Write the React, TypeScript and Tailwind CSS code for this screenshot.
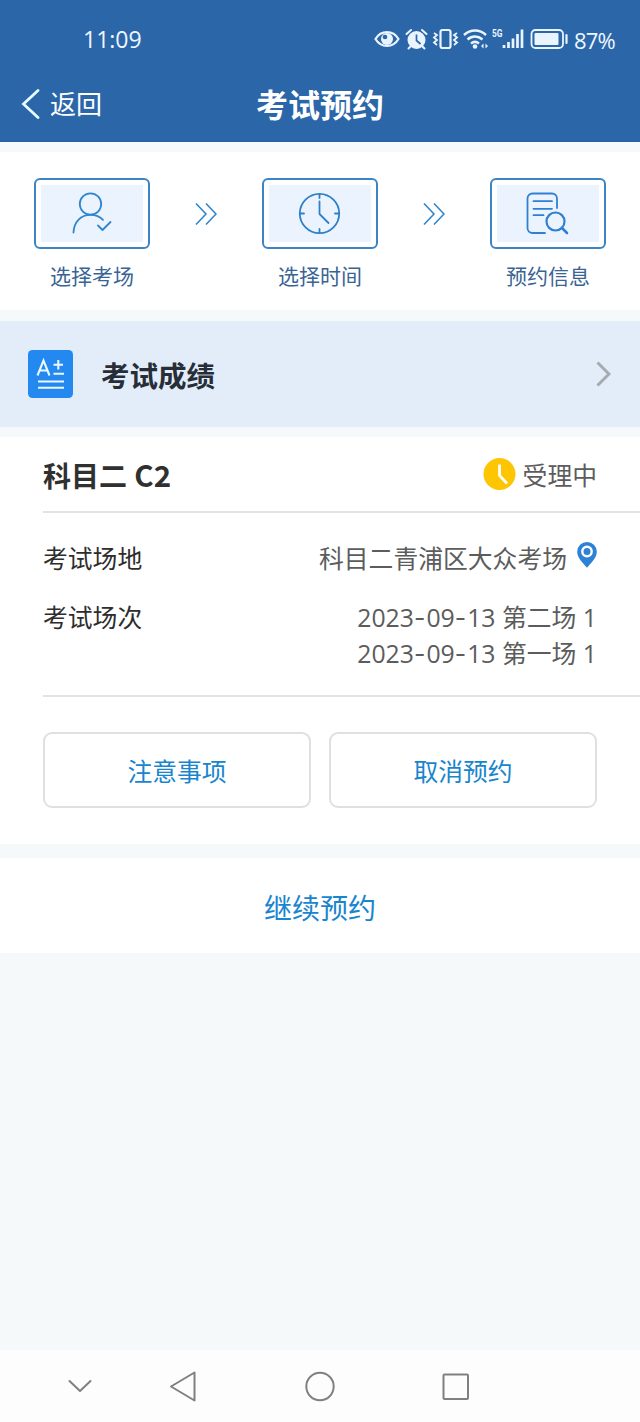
import type { ReactNode } from "react";

interface Step {
  label: string;
  icon: ReactNode;
}

const sessions = [
  { date: "2023-09-13", name: "第二场", count: 1 },
  { date: "2023-09-13", name: "第一场", count: 1 },
];

function UserCheckIcon() {
  return (
    <svg width="44" height="44" viewBox="0 0 44 44" fill="none" stroke="#2f86cc" strokeWidth="1.8" strokeLinecap="round">
      <circle cx="20.5" cy="12" r="10.7" />
      <path d="M3.5 40.500C4 29.500 11 22.800 20.5 22.800c5 0 9.500 1.700 12.500 5" />
      <path d="M28 33.500l4.500 4.500 8-8" strokeLinejoin="round" />
    </svg>
  );
}

function ClockIcon() {
  return (
    <svg width="44" height="44" viewBox="0 0 44 44" fill="none" stroke="#2f80c6" strokeWidth="1.8" strokeLinecap="round">
      <circle cx="21.500" cy="21.500" r="19.7" />
      <path d="M21.500 9.500v12.500l9 9" strokeLinejoin="round" />
      <path d="M21.500 2.500v3.500M21.500 37v3.500M2.500 21.500h3.500M37 21.500h3.500" />
    </svg>
  );
}

function DocSearchIcon() {
  return (
    <svg width="44" height="44" viewBox="0 0 44 44" fill="none" stroke="#2f80d0" strokeWidth="1.8" strokeLinecap="round">
      <path d="M31 16V6.500a5 5 0 0 0-5-5H6.500a5 5 0 0 0-5 5v29.500a5 5 0 0 0 5 5h12.500" />
      <path d="M7.500 9.200h18.500M7.500 16.800h18.500M7.500 23.200h10" />
      <circle cx="29.500" cy="29.500" r="9" strokeWidth="2.200" />
      <path d="M36 36l5 5" strokeWidth="2.600" />
    </svg>
  );
}

const steps: Step[] = [
  { label: "选择考场", icon: <UserCheckIcon /> },
  { label: "选择时间", icon: <ClockIcon /> },
  { label: "预约信息", icon: <DocSearchIcon /> },
];

function DoubleArrow() {
  return (
    <svg width="22" height="24" viewBox="0 0 22 24" fill="none" stroke="#2f86cc" strokeWidth="1.6" className="mt-6">
      <path d="M1 1.500l10 10.500-10 10.500M11 1.500l10 10.500-10 10.500" />
    </svg>
  );
}

function StatusIcons() {
  return (
    <svg width="196" height="24" viewBox="0 0 196 24" fill="none" stroke="#e9f4ff">
      {/* Eye */}
      <path d="M1.500 12C7 2.800 19 2.800 24.500 12 19 21.200 7 21.200 1.500 12z" strokeWidth="2.200" />
      <circle cx="13" cy="12" r="6" fill="#e9f4ff" stroke="none" />
      <circle cx="11" cy="10" r="2.300" fill="#2b66a8" stroke="none" />
      {/* Alarm */}
      <circle cx="42.500" cy="13" r="9" fill="#e9f4ff" stroke="none" />
      <path d="M32.500 7l4.500-4M48 3l4.500 4M37 19l-2.500 2.500M48 19l2.500 2.500" strokeWidth="2" strokeLinecap="round" />
      <path d="M42.500 7.500v6l4 3.500" stroke="#2b66a8" strokeWidth="1.700" />
      {/* Vibrate */}
      <rect x="66.500" y="3" width="10" height="18" rx="2" strokeWidth="2.200" />
      <path d="M60 6l3 2-3 2.500 3 2.500-3 2.500 3 2.500M83 6l-3 2 3 2.500-3 2.500 3 2.500-3 2.500" strokeWidth="1.800" />
      {/* Wifi */}
      <path d="M90 8c6.500-6 15.500-6 22 0M93.500 12.500c4.500-4 10.500-4 15 0M97 16.500c2.500-2 5.500-2 8 0" strokeWidth="2.500" />
      <circle cx="101" cy="19.500" r="2.300" fill="#e9f4ff" stroke="none" />
      <path d="M109.500 16.500v5l-2.500-2.500zM111.500 16.500v5l2.500-2.500z" fill="#e9f4ff" stroke="none" />
      {/* Signal */}
      <text x="118" y="9.500" fill="#e9f4ff" stroke="none" fontFamily="Roboto" fontWeight="700" fontSize="11.500" textLength="10.500" lengthAdjust="spacingAndGlyphs">
        5G
      </text>
      <path d="M130 21v-3M134.500 21v-6M139 21V11.500M143.500 21V7M148 21V2.500" strokeWidth="2.700" />
      {/* Battery */}
      <rect x="157.500" y="3" width="31.500" height="18" rx="4" strokeWidth="1.800" />
      <rect x="160.500" y="6" width="24" height="12" rx="1" fill="#e9f4ff" stroke="none" />
      <path d="M192.500 8v8" strokeWidth="2.200" strokeLinecap="round" />
    </svg>
  );
}

function DateText({ value }: { value: string }) {
  const parts = value.split("-");
  return (
    <>
      {parts.map((part, index) => (
        <span key={index}>
          {index > 0 && <span className="font-['Inter'] tracking-[1px]">-</span>}
          {part}
        </span>
      ))}
    </>
  );
}

export default function App() {
  return (
    <div className="flex h-[1422px] w-[640px] flex-col overflow-hidden bg-[#f5f9fa] font-['Open_Sans','Noto_Sans_CJK_SC',sans-serif] leading-none">
      {/* Header */}
      <header className="h-[142px] border-b-2 border-[#2d5eaa] bg-[#2b66a8] text-white">
        <div className="flex h-[66px] items-center justify-between pt-3 pr-[26px] pl-[83px] text-[#eef6ff]">
          <span className="pt-px text-[23px]">11:09</span>
          <div className="flex items-center gap-1">
            <StatusIcons />
            <span className="w-10 pt-0.5 text-[22px] tracking-[-0.8px]">87%</span>
          </div>
        </div>
        <div className="grid h-[76px] grid-cols-3 items-center">
          <button className="flex items-center gap-2.5 pl-[21px] text-[26px]">
            <svg width="19" height="30" viewBox="0 0 19 30" fill="none" stroke="#e6fbff" strokeWidth="2.800">
              <path d="M17 1.500L2.500 15 17 28.500" strokeLinecap="round" />
            </svg>
            返回
          </button>
          <h1 className="pt-px text-center text-[32px] font-bold">考试预约</h1>
        </div>
      </header>

      {/* Steps */}
      <section className="mt-2.5 flex h-[158px] items-start justify-between bg-white px-[34px] pt-[26px]">
        {steps.map((step, index) => (
          <div key={step.label} className="contents">
            {index > 0 && <DoubleArrow />}
            <div className="flex w-[116px] flex-col items-center">
              <div className="h-[71px] w-full rounded-md border-2 border-[#3b85c4] p-[5px]">
                <div className="flex h-full items-center justify-center bg-[#ebf3ff]">{step.icon}</div>
              </div>
              <p className="mt-[15px] text-[21px] leading-6 text-[#3a6494]">{step.label}</p>
            </div>
          </div>
        ))}
      </section>

      {/* Score entry */}
      <section className="mt-[11px] flex h-[106px] items-center bg-[#e2edf9] pr-[29px] pl-7">
        <svg width="45" height="48" viewBox="0 0 45 48">
          <rect width="45" height="48" rx="4.500" fill="#2488f1" />
          <path
            d="M9.500 25.500L15.500 10.500l6 15M11.800 20.500h7.600M25.500 14.700h9.500M30.300 10v9.500M25.500 23.800h10.500M10 31.500h26M10 37.800h26"
            fill="none"
            stroke="#eaf8ff"
            strokeWidth="2.100"
          />
        </svg>
        <h2 className="ml-7 flex-1 pt-1 text-[28.500px] font-bold text-[#272e38]">考试成绩</h2>
        <svg width="15" height="26" viewBox="0 0 15 26" fill="none" stroke="#a7abb0" strokeWidth="3">
          <path d="M1.500 1.500L13 13 1.500 24.500" />
        </svg>
      </section>

      {/* Appointment */}
      <section className="mt-2.5 h-[407px] bg-white pl-[43px] text-[24.800px] text-[#5c5c5c]">
        <div className="flex h-[76px] items-center justify-between border-b-2 border-[#e3e3e3] pr-[43px]">
          <h2 className="pt-0.5 font-['Noto_Sans_CJK_SC',sans-serif] text-[28px] font-bold text-[#303030]">
            科目二 <span className="ml-px text-[29.500px]">C2</span>
          </h2>
          <div className="flex items-center gap-[7px]">
            <svg width="33" height="33" viewBox="0 0 33 33" fill="none">
              <circle cx="16.500" cy="16" r="16" fill="#fdc502" />
              <path d="M16.500 6.500v11l7.500 8" stroke="#fff" strokeWidth="2.800" />
            </svg>
            <span className="pt-0.5">受理中</span>
          </div>
        </div>

        <div className="flex h-[184px] flex-col border-b-2 border-[#e3e3e3] pt-[27px] pr-[43px]">
          <div className="flex h-9 items-center justify-between">
            <span className="text-[#2d2d2d]">考试场地</span>
            <div className="flex items-center gap-2.5">
              <span>科目二青浦区大众考场</span>
              <svg width="20" height="26" viewBox="0 0 20 26" className="-mt-1.5">
                <path d="M10 0a9.800 9.800 0 0 0-9.800 9.800C.2 16 6 21 10 25.800 14 21 19.800 16 19.800 9.800A9.800 9.800 0 0 0 10 0z" fill="#2d82d8" />
                <circle cx="10" cy="9.500" r="4.700" fill="none" stroke="#fff" strokeWidth="2.400" />
              </svg>
            </div>
          </div>
          <div className="mt-6 flex items-start justify-between leading-[35px]">
            <span className="text-[#2d2d2d]">考试场次</span>
            <div className="text-right">
              {sessions.map((session) => (
                <p key={session.name}>
                  <DateText value={session.date} /> {session.name} {session.count}
                </p>
              ))}
            </div>
          </div>
        </div>

        <div className="flex gap-[18px] pt-[35px] pr-[43px] text-[#1985cd]">
          <button className="h-[76px] flex-1 rounded-[9px] border-2 border-[#e0e0e0] pt-[3px]">注意事项</button>
          <button className="h-[76px] flex-1 rounded-[9px] border-2 border-[#e0e0e0] pt-[3px]">取消预约</button>
        </div>
      </section>

      <button className="mt-3.5 h-[95px] shrink-0 bg-white pt-1 text-[28px] text-[#1985cd]">继续预约</button>

      {/* System navigation */}
      <nav className="mt-auto h-[72px] bg-[#fdfdfd]">
        <svg width="640" height="72" viewBox="0 0 640 72" fill="none" stroke="#808080" strokeWidth="2" strokeLinejoin="round" strokeLinecap="round">
          <path d="M69.500 31l10.500 10 10.500-10" />
          <path d="M171 36.500l23.500-14v28z" />
          <circle cx="320" cy="36.500" r="13.700" />
          <rect x="443.500" y="24.500" width="24.500" height="24.500" rx="1" />
        </svg>
      </nav>
    </div>
  );
}
